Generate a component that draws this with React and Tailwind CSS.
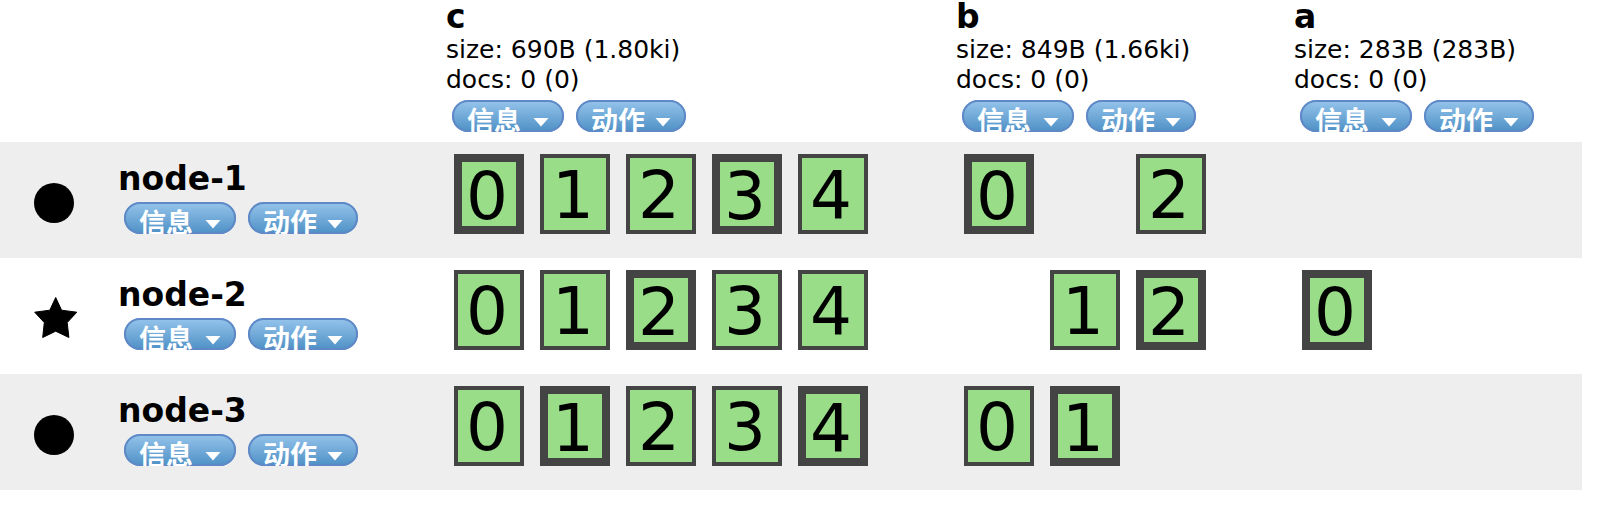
const indices = [
  { name: 'c', size: '690B (1.80ki)', docs: '0 (0)' },
  { name: 'b', size: '849B (1.66ki)', docs: '0 (0)' },
  { name: 'a', size: '283B (283B)', docs: '0 (0)' },
];

// p = primary shard, r = replica shard, null = not allocated on this node
const nodes = [
  { name: 'node-1', master: false, shards: { c: ['p', 'r', 'r', 'p', 'r'], b: ['p', null, 'r'], a: [null] } },
  { name: 'node-2', master: true, shards: { c: ['r', 'r', 'p', 'r', 'r'], b: [null, 'r', 'p'], a: ['p'] } },
  { name: 'node-3', master: false, shards: { c: ['r', 'p', 'r', 'r', 'p'], b: ['r', 'p', null], a: [null] } },
];

function MenuButton({ children, width }) {
  return (
    <button
      type="button"
      aria-haspopup="menu"
      className={`${width} flex h-8 items-start justify-between overflow-hidden rounded-full bg-linear-to-b from-[#96c5ec] to-[#4d90c5] px-[15px] text-[27px] leading-[44px] font-bold text-white shadow-[inset_0_0_0_2px_#5f88c6]`}
    >
      <span>{children}</span>
      <svg viewBox="0 0 16 10" className="mt-[17px] h-[10px] w-4" aria-hidden="true">
        <path d="M0.5 1H15.5L8 9.5Z" fill="#fff" />
      </svg>
    </button>
  );
}

function Menus() {
  return (
    <div className="flex gap-3 px-1.5">
      <MenuButton width="w-28">信息</MenuButton>
      <MenuButton width="w-[110px]">动作</MenuButton>
    </div>
  );
}

function Shard({ id, kind }) {
  if (!kind) return <span className="h-20 w-[70px]" />;
  return (
    <button
      type="button"
      className={`h-20 w-[70px] border-[#444] bg-[#99dd88] text-left text-[66px] leading-[64px] ${
        kind === 'p' ? 'border-8 pt-[3px] pl-1' : 'border-4 pt-[3px] pl-2'
      }`}
    >
      {id}
    </button>
  );
}

function NodeMark({ master }) {
  return master ? (
    <svg viewBox="0 0 44 43" className="mt-0.5 ml-[34px] h-[43px] w-11" role="img" aria-label="master">
      <path
        d="M21.7 1.5L27.6 14.2L42.8 16.2L33.2 26.6L34.9 41.5L21.7 35.2L8.7 41.5L10.3 26.6L0.7 16.2L15.8 14.2Z"
        strokeWidth="1"
        stroke="#000"
        strokeLinejoin="round"
      />
    </svg>
  ) : (
    <div className="mt-1.5 ml-[34px] size-10 rounded-full bg-black" />
  );
}

export default function App() {
  return (
    <main className="min-h-screen bg-white pr-9 font-['DejaVu_Sans','Noto_Sans_CJK_SC',sans-serif] text-black">
      <table className="w-full table-fixed border-collapse text-left">
        <colgroup>
          <col className="w-[118px]" />
          <col className="w-[328px]" />
          <col className="w-[510px]" />
          <col className="w-[338px]" />
          <col />
        </colgroup>
        <thead>
          <tr className="h-[142px] align-top">
            <td />
            <td />
            {indices.map((index) => (
              <th key={index.name} scope="col" className="p-0 text-[25px] leading-[30px] font-normal">
                <div className="mb-0.5 text-[33px] leading-[33px] font-bold">{index.name}</div>
                <div>size: {index.size}</div>
                <div className="mb-[5px]">docs: {index.docs}</div>
                <Menus />
              </th>
            ))}
          </tr>
        </thead>
        <tbody>
          {nodes.map((node) => (
            <tr key={node.name} className="h-[116px] odd:bg-[#eeeeee]">
              <td className="p-0 align-middle">
                <NodeMark master={node.master} />
              </td>
              <th scope="row" className="p-0 pt-5 align-top font-normal">
                <div className="mb-1.5 text-[33px] leading-[34px] font-bold">{node.name}</div>
                <Menus />
              </th>
              {indices.map((index) => (
                <td key={index.name} className="p-0 pt-3 align-top">
                  <div className="flex gap-4 px-2">
                    {node.shards[index.name].map((kind, id) => (
                      <Shard key={id} id={id} kind={kind} />
                    ))}
                  </div>
                </td>
              ))}
            </tr>
          ))}
        </tbody>
      </table>
    </main>
  );
}
